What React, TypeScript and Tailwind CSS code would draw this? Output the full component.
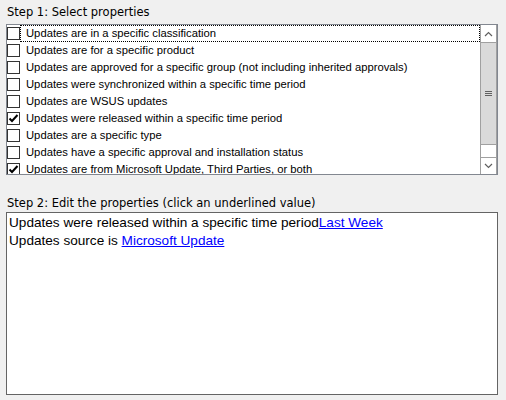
const items = [
  { label: "Updates are in a specific classification", checked: false, focus: true },
  { label: "Updates are for a specific product", checked: false },
  { label: "Updates are approved for a specific group (not including inherited approvals)", checked: false },
  { label: "Updates were synchronized within a specific time period", checked: false },
  { label: "Updates are WSUS updates", checked: false },
  { label: "Updates were released within a specific time period", checked: true },
  { label: "Updates are a specific type", checked: false },
  { label: "Updates have a specific approval and installation status", checked: false },
  { label: "Updates are from Microsoft Update, Third Parties, or both", checked: true },
];

function CheckBox({ checked }: { checked: boolean }) {
  return (
    <div className="w-[13px] h-[13px] border border-[#333333] bg-white shrink-0 flex items-center justify-center">
      {checked && (
        <svg width="11" height="11" viewBox="0 0 11 11">
          <path d="M1.5 5.5 L4 8 L9.5 2" fill="none" stroke="#000" strokeWidth="2" />
        </svg>
      )}
    </div>
  );
}

export default function App() {
  return (
    <div className="w-[506px] h-[400px] bg-[#f0f0f0] pl-[6px] overflow-hidden" style={{ fontFamily: "'DejaVu Sans', sans-serif" }}>
      <div className="h-[24px] pt-[4px] pl-[1px] text-[11.5px] text-black">Step 1: Select properties</div>

      {/* property list */}
      <div className="w-[492px] h-[151px] border border-[#828790] bg-white flex">
        <div className="flex-1 overflow-hidden" style={{ fontFamily: "'Liberation Sans', Arial, sans-serif" }}>
          {items.map((it) => (
            <div key={it.label} className="h-[17px] flex items-center">
              <CheckBox checked={it.checked} />
              <div
                className={
                  "h-[17px] flex-1 flex items-center pl-[5px] text-[11.25px] text-black whitespace-nowrap " +
                  (it.focus ? "border border-dotted border-black" : "border border-transparent")
                }
              >
                {it.label}
              </div>
            </div>
          ))}
        </div>
        <div className="w-[17px] flex flex-col bg-white border-x border-[#a0a0a0]">
          <div className="h-[18px] flex items-center justify-center border-b border-[#a0a0a0]">
            <svg width="9" height="6" viewBox="0 0 9 6">
              <path d="M1 5 L4.5 1.5 L8 5" fill="none" stroke="#606060" strokeWidth="1.2" />
            </svg>
          </div>
          <div className="h-[102px] bg-[#dadada] border-b border-[#a0a0a0] flex items-center justify-center">
            <div className="flex flex-col gap-[1px]">
              <div className="w-[7px] h-[1px] bg-[#606060]" />
              <div className="w-[7px] h-[1px] bg-[#606060]" />
              <div className="w-[7px] h-[1px] bg-[#606060]" />
            </div>
          </div>
          <div className="flex-1 border-b border-[#a0a0a0]" />
          <div className="h-[16px] flex items-center justify-center">
            <svg width="9" height="6" viewBox="0 0 9 6">
              <path d="M1 1 L4.5 4.5 L8 1" fill="none" stroke="#606060" strokeWidth="1.2" />
            </svg>
          </div>
        </div>
      </div>

      <div className="h-[37px] pt-[20px] pl-[1px] text-[11.5px] text-black">Step 2: Edit the properties (click an underlined value)</div>

      {/* property editor */}
      <div
        className="w-[492px] h-[183px] border border-[#646464] bg-white px-[2px] pt-[1px] text-[13.6px] leading-[18px] text-black"
        style={{ fontFamily: "'Liberation Sans', Arial, sans-serif" }}
      >
        <div>
          Updates were released within a specific time period
          <span className="text-[#0000ff] underline">Last Week</span>
        </div>
        <div>
          Updates source is <span className="text-[#0000ff] underline">Microsoft Update</span>
        </div>
      </div>
    </div>
  );
}
